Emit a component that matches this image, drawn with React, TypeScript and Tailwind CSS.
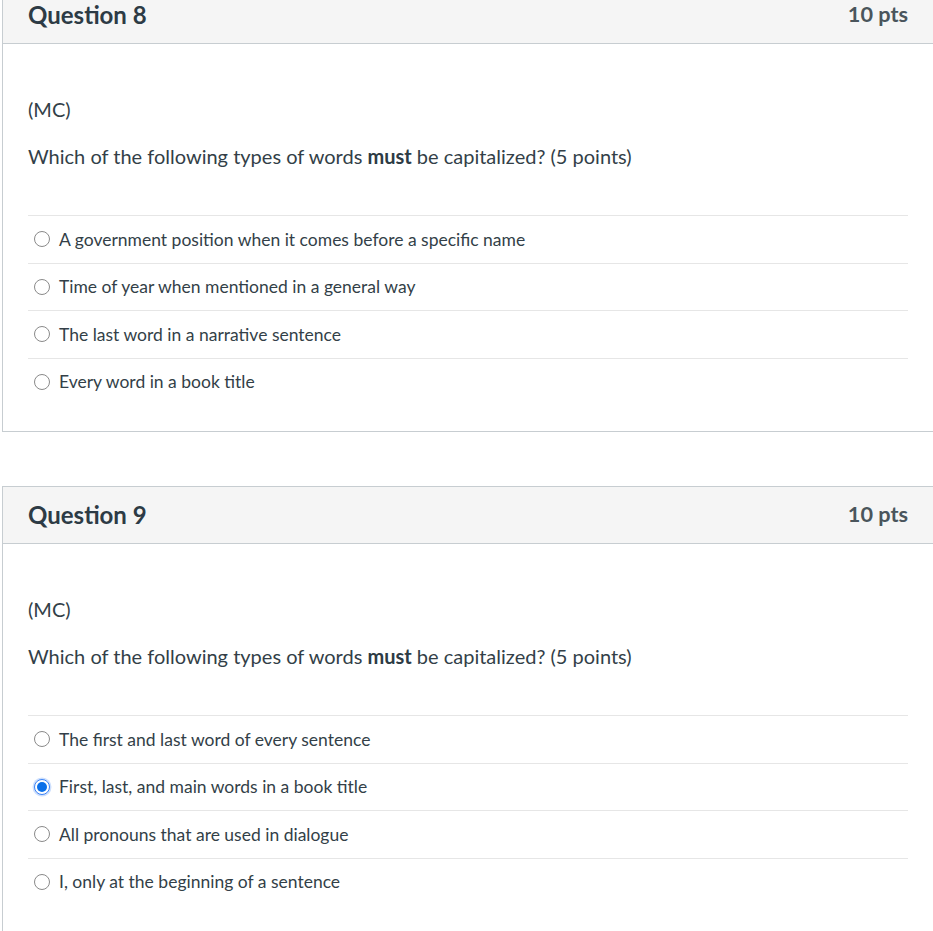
import React from 'react';

interface Question {
  number: number;
  points: string;
  answers: string[];
  selected: number | null;
}

const questions: Question[] = [
  {
    number: 8,
    points: '10 pts',
    answers: [
      'A government position when it comes before a specific name',
      'Time of year when mentioned in a general way',
      'The last word in a narrative sentence',
      'Every word in a book title',
    ],
    selected: null,
  },
  {
    number: 9,
    points: '10 pts',
    answers: [
      'The first and last word of every sentence',
      'First, last, and main words in a book title',
      'All pronouns that are used in dialogue',
      'I, only at the beginning of a sentence',
    ],
    selected: 1,
  },
];

const Radio: React.FC<{ checked: boolean }> = ({ checked }) =>
  checked ? (
    <span className="w-[16px] h-[16px] rounded-full border-[1.5px] border-[#3b82f6] bg-white flex items-center justify-center shadow-[0_0_0_1.5px_rgba(59,130,246,0.25)]">
      <span className="w-[10px] h-[10px] rounded-full bg-[#0b6fe8]" />
    </span>
  ) : (
    <span className="w-[16px] h-[16px] rounded-full border border-[#8a8a8a] bg-white" />
  );

const QuestionCard: React.FC<{ q: Question }> = ({ q }) => (
  <div className="w-[932px] border border-[#c7cdd1] bg-white">
    <div className="h-[57px] bg-[#f5f5f5] border-b border-[#c7cdd1] flex items-center justify-between pl-[25px] pr-[25px]">
      <h2 className="text-[24px] font-bold text-[#2d3b45] leading-none">Question {q.number}</h2>
      <span className="text-[21.7px] font-bold text-[#4a555c] leading-none">{q.points}</span>
    </div>
    <div className="pl-[25px] pr-[25px] pt-[52px] pb-[26px]">
      <p className="text-[20px] leading-[27px] text-[#333f48]">(MC)</p>
      <p className="mt-[20px] text-[20px] leading-[27px] text-[#333f48]">
        Which of the following types of words <strong className="font-bold text-[#2d3b45]">must</strong> be capitalized? (5 points)
      </p>
      <div className="mt-[45px]">
        {q.answers.map((a, i) => (
          <div key={i} className="h-[47.5px] border-t border-[#e6e6e6] flex items-center pl-[6px] gap-[9px]">
            <Radio checked={q.selected === i} />
            <span className="text-[17.5px] text-[#333f48] leading-none">{a}</span>
          </div>
        ))}
      </div>
    </div>
  </div>
);

export default function App() {
  return (
    <div className="w-[933px] h-[931px] overflow-hidden bg-white" style={{ fontFamily: 'Lato, "Open Sans", sans-serif' }}>
      <div className="-mt-[14px] pl-[2px] flex flex-col gap-[54px]">
        {questions.map((q) => (
          <QuestionCard key={q.number} q={q} />
        ))}
      </div>
    </div>
  );
}
